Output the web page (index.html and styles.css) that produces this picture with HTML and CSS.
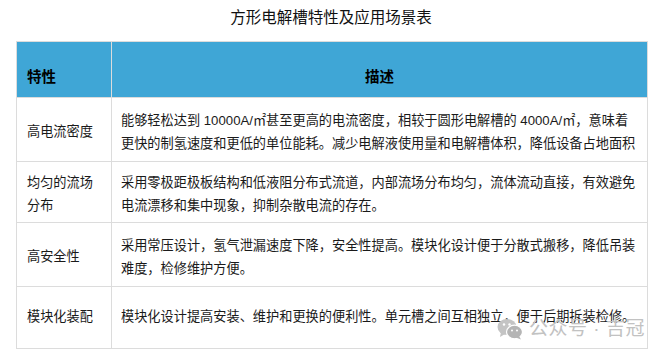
FILE: index.html
```html
<!DOCTYPE html>
<html lang="zh">
<head>
<meta charset="utf-8">
<link rel="stylesheet" href="styles.css">
</head>
<body>
<div class="page">
  <h1 class="title">方形电解槽特性及应用场景表</h1>
  <table class="spec">
    <thead>
      <tr class="rh"><th class="c1">特性</th><th class="c2">描述</th></tr>
    </thead>
    <tbody>
      <tr class="r1"><td class="c1">高电流密度</td><td class="c2">能够轻松达到 10000A/㎡甚至更高的电流密度，相较于圆形电解槽的 4000A/㎡，意味着更快的制氢速度和更低的单位能耗。减少电解液使用量和电解槽体积，降低设备占地面积</td></tr>
      <tr class="r2"><td class="c1">均匀的流场分布</td><td class="c2">采用零极距极板结构和低液阻分布式流道，内部流场分布均匀，流体流动直接，有效避免电流漂移和集中现象，抑制杂散电流的存在。</td></tr>
      <tr class="r3"><td class="c1">高安全性</td><td class="c2">采用常压设计，氢气泄漏速度下降，安全性提高。模块化设计便于分散式搬移，降低吊装难度，检修维护方便。</td></tr>
      <tr class="r4"><td class="c1">模块化装配</td><td class="c2">模块化设计提高安装、维护和更换的便利性。单元槽之间互相独立，便于后期拆装检修。</td></tr>
    </tbody>
  </table>
  <div class="watermark">
    <svg class="wm-icon" viewBox="0 0 26 22" width="26" height="22">
      <ellipse cx="10" cy="9" rx="9.5" ry="8" fill="#c4c4c4"/>
      <path d="M4 14 L3 19 L8 16 Z" fill="#c4c4c4"/>
      <ellipse cx="17.5" cy="14" rx="8" ry="6.8" fill="#b5b5b5" stroke="#fff" stroke-width="1.2"/>
      <path d="M22 18 L24 21.5 L19 19.5 Z" fill="#b5b5b5"/>
      <circle cx="7" cy="6.5" r="1.2" fill="#fff"/>
      <circle cx="12.5" cy="6.5" r="1.2" fill="#fff"/>
      <circle cx="15" cy="12.5" r="1" fill="#fff"/>
      <circle cx="20" cy="12.5" r="1" fill="#fff"/>
    </svg>
    <span class="wm-text">公众号 · 吉冠</span>
  </div>
</div>
</body>
</html>
```
FILE: styles.css
```css
html, body {
  margin: 0;
  padding: 0;
  background: #fff;
}
body {
  font-family: "Liberation Sans", "Noto Sans CJK SC", sans-serif;
  color: #1a1a1a;
}
.page {
  position: relative;
  width: 662px;
  height: 356px;
  overflow: hidden;
}
.title {
  margin: 0;
  padding-top: 6px;
  height: 41px;
  box-sizing: border-box;
  text-align: center;
  font-size: 15.5px;
  font-weight: normal;
  line-height: 24px;
  color: #111;
}
.spec {
  margin-left: 16px;
  width: 632px;
  border-collapse: collapse;
  table-layout: fixed;
  font-size: 13.2px;
  line-height: 22.6px;
}
.spec th, .spec td {
  border: 1px solid #dcdcdc;
  box-sizing: border-box;
}
.spec .c1 { width: 95px; }
.spec th {
  background: #3fa6d6;
  vertical-align: bottom;
  padding: 0 10px 8px;
  font-size: 14.5px;
  font-weight: bold;
  color: #000;
}
.spec th.c1 { text-align: left; }
.spec th.c2 { text-align: center; }
.spec td {
  vertical-align: middle;
  padding: 6px 10px 0 10px;
}
.spec td.c2 { padding-left: 9px; padding-right: 9px; }
.spec .rh { height: 56px; }
.spec .r1 { height: 64px; }
.spec .r2 { height: 61px; }
.spec .r3 { height: 64px; }
.spec .r4 { height: 62px; }
.spec .r4 td { padding-top: 0; }
.watermark {
  position: absolute;
  left: 497px;
  top: 317px;
  display: flex;
  align-items: center;
  gap: 6px;
}
.wm-icon { display: block; }
.wm-text {
  font-size: 19px;
  line-height: 24px;
  color: #c2c2c2;
  letter-spacing: 0.5px;
}
```
